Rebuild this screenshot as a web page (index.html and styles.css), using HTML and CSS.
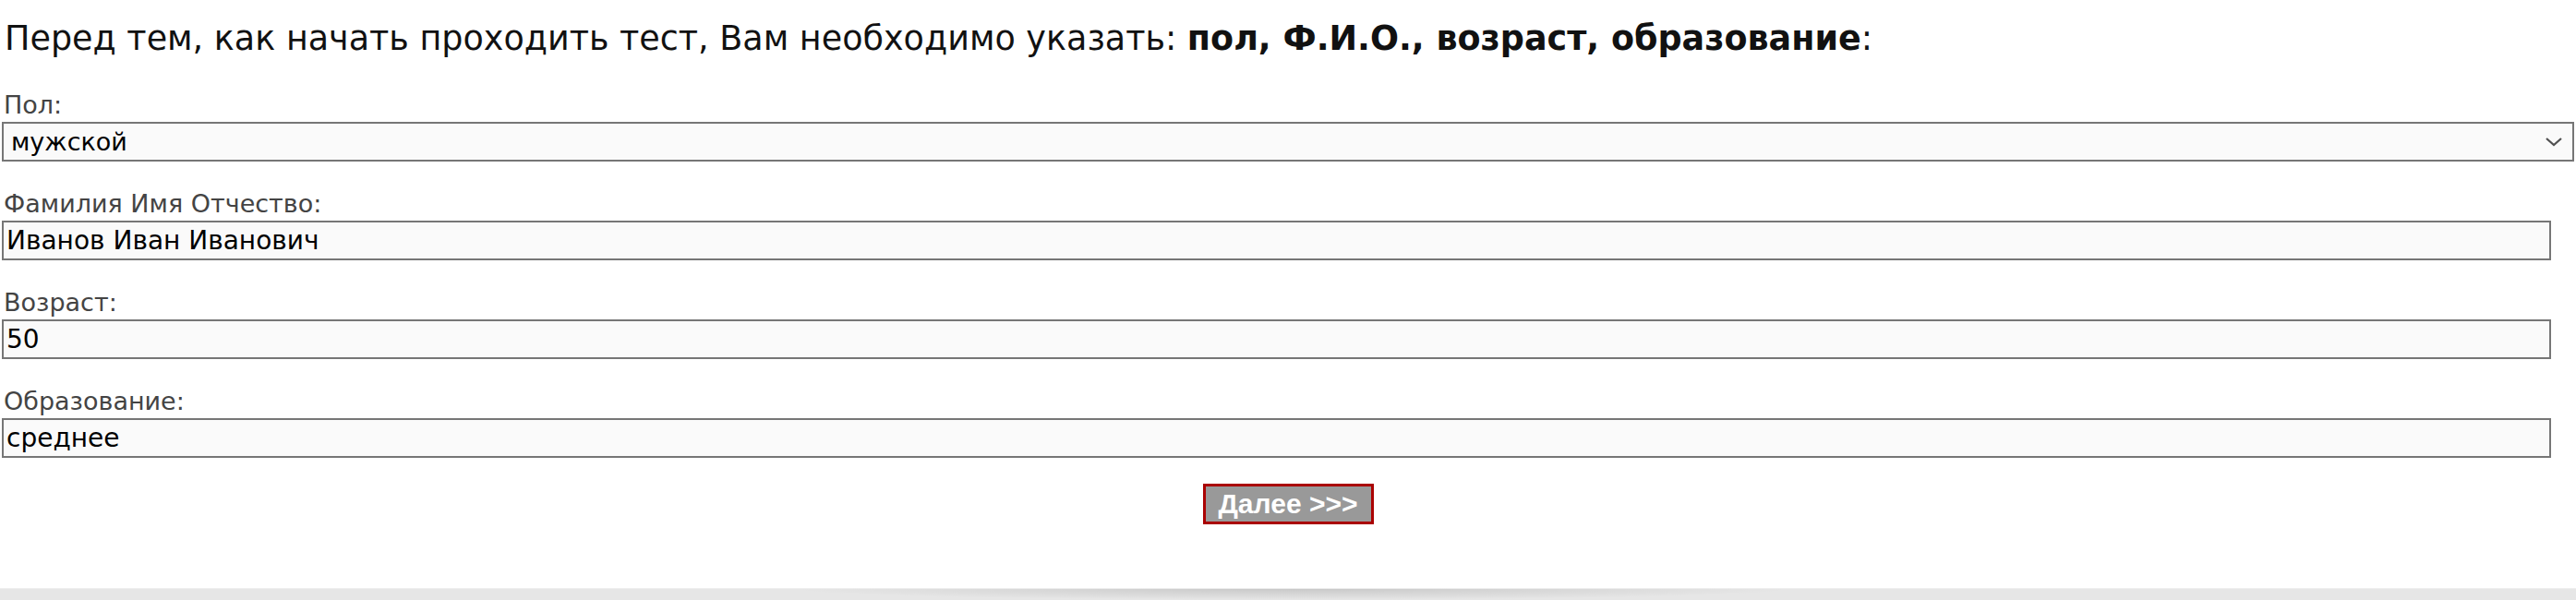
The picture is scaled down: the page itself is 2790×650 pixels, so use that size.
FILE: index.html
```html
<!DOCTYPE html>
<html lang="ru">
<head>
<meta charset="utf-8">
<title>Анкета</title>
<link rel="stylesheet" href="styles.css">
</head>
<body>
<div class="page">
  <p class="intro">Перед тем, как начать проходить тест, Вам необходимо указать: <b>пол, Ф.И.О., возраст, образование</b>:</p>
  <form class="form">
    <div class="field">
      <label class="label" for="sex">Пол:</label>
      <div class="select-wrap">
        <select id="sex" class="select"><option>мужской</option><option>женский</option></select>
        <svg class="chevron" width="20" height="12" viewBox="0 0 20 12"><path d="M2 2 L10 9 L18 2" fill="none" stroke="#505050" stroke-width="2.2"/></svg>
      </div>
    </div>
    <div class="field">
      <label class="label" for="fio">Фамилия Имя Отчество:</label>
      <input id="fio" class="input" type="text" value="Иванов Иван Иванович">
    </div>
    <div class="field">
      <label class="label" for="age">Возраст:</label>
      <input id="age" class="input" type="text" value="50">
    </div>
    <div class="field">
      <label class="label" for="edu">Образование:</label>
      <input id="edu" class="input" type="text" value="среднее">
    </div>
    <div class="actions">
      <button type="button" class="btn">Далее &gt;&gt;&gt;</button>
    </div>
  </form>
</div>
<div class="footer"></div>
</body>
</html>
```
FILE: styles.css
```css
html, body {
  margin: 0;
  padding: 0;
  background: #fff;
}
body {
  height: 650px;
  display: flex;
  flex-direction: column;
  font-family: "DejaVu Sans", sans-serif;
  color: #000;
}
.page {
  flex: 1;
  padding: 0 2px;
}
.intro {
  margin: 0;
  padding: 20px 0 0 3px;
  font-size: 36.5px;
  line-height: 44px;
  color: #111;
  white-space: nowrap;
}
.intro b {
  font-weight: bold;
}
.form {
  margin: 0;
  padding-top: 32px;
  display: flex;
  flex-direction: column;
  gap: 28px;
}
.field {
  display: flex;
  flex-direction: column;
}
.label {
  font-size: 27px;
  line-height: 36px;
  color: #444;
  padding-left: 2px;
}
.select-wrap {
  position: relative;
  width: 2786px;
}
.select,
.input {
  box-sizing: border-box;
  height: 43px;
  margin: 0;
  border: 2px solid #767676;
  background: #fafafa;
  font-family: "DejaVu Sans", sans-serif;
  font-size: 28px;
  color: #000;
  padding: 0 3px;
  outline: none;
  border-radius: 0;
}
.select {
  width: 100%;
  appearance: none;
  -webkit-appearance: none;
  padding-left: 8px;
  font-size: 27px;
}
.input {
  width: 2761px;
}
.chevron {
  position: absolute;
  right: 12px;
  top: 16px;
}
.actions {
  display: flex;
  justify-content: center;
}
.btn {
  box-sizing: border-box;
  width: 185px;
  height: 44px;
  margin: 0;
  padding: 0;
  background: #999;
  border: 3px solid #a00;
  color: #fff;
  font-family: "Liberation Sans", Arial, sans-serif;
  font-size: 30px;
  font-weight: bold;
  cursor: pointer;
}
.footer {
  position: relative;
  height: 12px;
  background: #e6e6e6;
  border-top: 1px solid #eee;
}
.footer::before {
  content: "";
  position: absolute;
  left: 860px;
  width: 1080px;
  top: 0;
  height: 12px;
  background: radial-gradient(ellipse 50% 100% at 50% 0%, rgba(0,0,0,0.13), rgba(0,0,0,0));
}
```
